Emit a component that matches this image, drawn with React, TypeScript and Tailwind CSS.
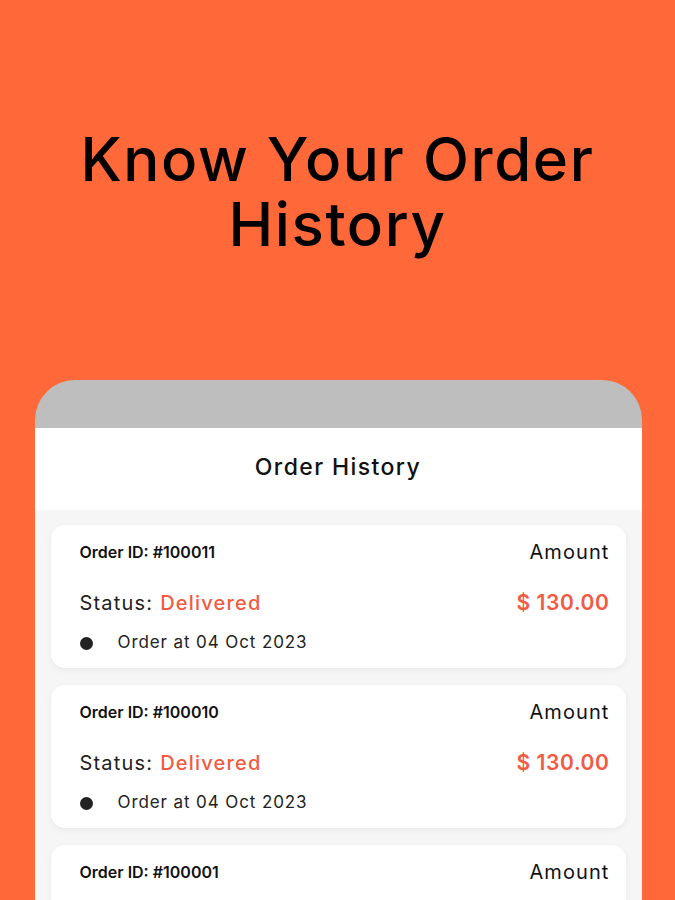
import * as React from 'react';

type Order = { id: string; status: string; amount: string; date: string };

const orders: Order[] = [
	{ id: '#100011', status: 'Delivered', amount: '$ 130.00', date: '04 Oct 2023' },
	{ id: '#100010', status: 'Delivered', amount: '$ 130.00', date: '04 Oct 2023' },
	{ id: '#100001', status: 'Delivered', amount: '$ 130.00', date: '04 Oct 2023' },
];

function OrderCard({ order }: { order: Order }) {
	return (
		<div className="bg-white rounded-[14px] shadow-[0_2px_6px_rgba(0,0,0,0.06)] pl-[29px] pr-[16px] pt-[14px] pb-[13px] shrink-0">
			<div className="flex items-center justify-between h-[26px]">
				<p className="text-[16px] font-semibold text-[#111]">Order ID: {order.id}</p>
				<p className="text-[20px] text-[#111] tracking-[1.1px]">Amount</p>
			</div>
			<div className="flex items-center justify-between h-[26px] mt-[25px]">
				<p className="text-[20px] text-[#222] tracking-[1.2px]">
					Status: <span className="text-[#f25a43] font-medium">{order.status}</span>
				</p>
				<p className="text-[21px] font-semibold text-[#f25a43] tracking-[0.6px]">{order.amount}</p>
			</div>
			<div className="flex items-center mt-[15px] h-[24px]">
				<span className="w-[13px] h-[13px] rounded-full bg-[#222]" />
				<p className="ml-[25px] text-[17px] text-[#222] tracking-[0.9px]">Order at {order.date}</p>
			</div>
		</div>
	);
}

export default function App() {
	return (
		<div
			className="w-[675px] h-[900px] overflow-hidden bg-[#ff6839] flex flex-col items-center"
			style={{ fontFamily: 'Inter, "Noto Sans", sans-serif' }}
		>
			<h1 className="mt-[127px] text-[60px] leading-[65px] text-black text-center font-medium tracking-[1.6px]">
				Know Your Order
				<br />
				History
			</h1>
			<div className="mt-[123px] w-[607px] ml-[1px] flex-1 rounded-t-[40px] bg-[#bebebe] overflow-hidden flex flex-col">
				<div className="h-[48px] shrink-0" />
				<div className="bg-white h-[82px] shrink-0 flex items-center justify-center">
					<p className="text-[23px] font-medium text-[#111] mt-[-4px] tracking-[1.4px]">Order History</p>
				</div>
				<div className="flex-1 bg-[#f6f6f6] px-[16px] pt-[15px] flex flex-col gap-[17px]">
					{orders.map((o) => (
						<OrderCard key={o.id} order={o} />
					))}
				</div>
			</div>
		</div>
	);
}
